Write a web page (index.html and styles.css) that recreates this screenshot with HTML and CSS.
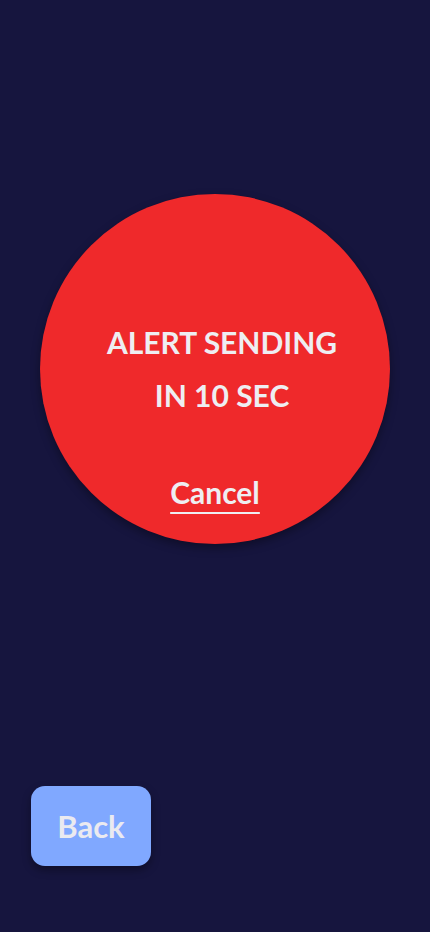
FILE: index.html
```html
<!DOCTYPE html>
<html>
<head>
<meta charset="utf-8">
<link rel="stylesheet" href="styles.css">
</head>
<body>
<div class="screen">
  <div class="circle-wrap">
    <div class="circle">
      <div class="msg">ALERT SENDING<br>IN 10 SEC</div>
      <a class="cancel">Cancel</a>
    </div>
  </div>
  <div class="footer">
    <button class="back">Back</button>
  </div>
</div>
</body>
</html>
```
FILE: styles.css
```css
html, body {
  margin: 0;
  padding: 0;
  background: #16153e;
}
.screen {
  width: 430px;
  height: 932px;
  display: flex;
  flex-direction: column;
  font-family: Lato, "Noto Sans", sans-serif;
}
.circle-wrap {
  display: flex;
  justify-content: center;
  padding-top: 194px;
}
.circle {
  width: 350px;
  height: 350px;
  border-radius: 50%;
  background: #ef292b;
  box-shadow: 0 4px 10px rgba(0,0,0,0.35);
  display: flex;
  flex-direction: column;
  align-items: center;
  box-sizing: border-box;
  padding-top: 122px;
}
.msg {
  color: #eeeef2;
  font-weight: 700;
  font-size: 30px;
  line-height: 53px;
  text-align: center;
  padding-left: 14px;
}
.cancel {
  margin-top: 52px;
  color: #eeeef2;
  font-weight: 700;
  font-size: 30px;
  line-height: 36px;
  text-decoration: underline;
  text-decoration-thickness: 2px;
  text-underline-offset: 8px;
}
.footer {
  margin-top: auto;
  padding: 0 0 66px 31px;
}
.back {
  width: 120px;
  height: 80px;
  border: none;
  border-radius: 14px;
  background: #80a8ff;
  color: #eaeaf0;
  font-family: Lato, "Noto Sans", sans-serif;
  font-weight: 700;
  font-size: 31px;
  box-shadow: 0 4px 8px rgba(0,0,0,0.35);
  padding: 0;
}
```
